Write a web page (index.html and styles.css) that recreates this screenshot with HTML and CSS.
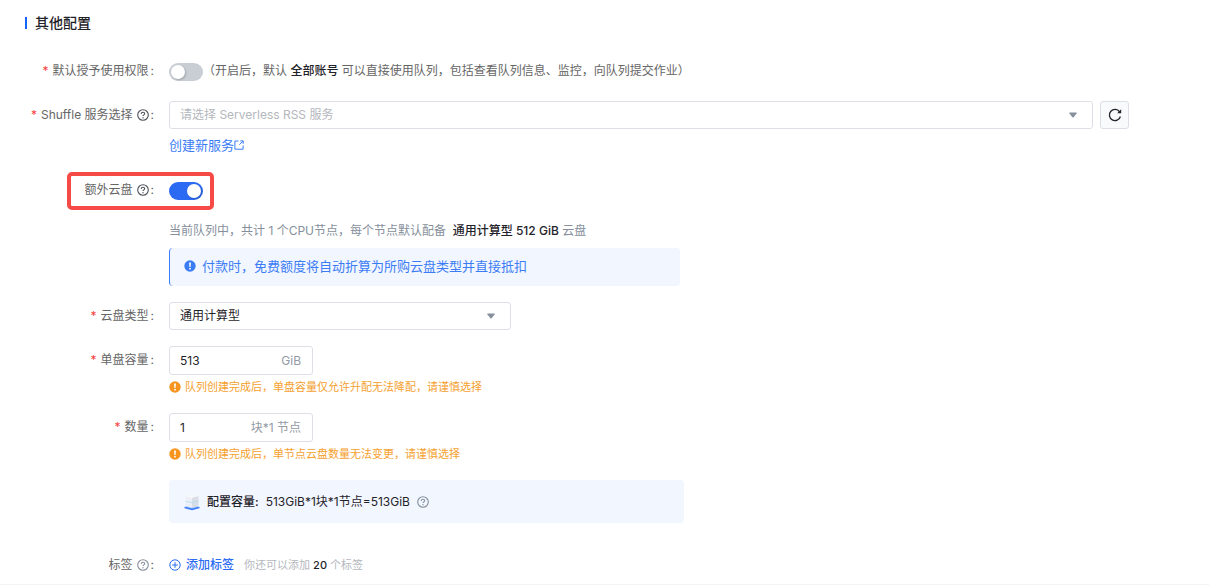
FILE: index.html
```html
<!DOCTYPE html>
<html lang="zh-CN">
<head>
    <meta charset="UTF-8">
    <meta name="viewport" content="width=device-width, initial-scale=1.0">
    <title>其他配置</title>
    <link rel="stylesheet" href="styles.css">
</head>
<body>

    <!-- shared icons -->
    <svg class="sprite" aria-hidden="true">
        <symbol id="icon-help" viewBox="0 0 12 12">
            <circle cx="6" cy="6" r="5.3" fill="none" stroke="currentColor" stroke-width="1.1"/>
            <path d="M4.3 4.9C4.3 3.8 5 3.2 6 3.2s1.7.6 1.7 1.5c0 1.2-1.7 1.2-1.7 2.4" fill="none" stroke="currentColor" stroke-width="1.1"/>
            <circle cx="6" cy="8.7" r=".7" fill="currentColor"/>
        </symbol>
        <symbol id="icon-alert" viewBox="0 0 12 12">
            <circle cx="6" cy="6" r="5.7" fill="currentColor"/>
            <path d="M5.1 2.6h1.8L6.6 7H5.4z" fill="#fff"/>
            <circle cx="6" cy="8.7" r=".9" fill="#fff"/>
        </symbol>
        <symbol id="icon-arrow" viewBox="0 0 8 6">
            <path d="M.4.5h7.2v1L4.6 5.2q-.6.6-1.2 0L.4 1.5z" fill="currentColor"/>
        </symbol>
    </svg>

    <form class="config">
        <h2 class="title">其他配置</h2>

        <div class="row">
            <label class="label required" for="grant">默认授予使用权限<span class="colon">:</span></label>
            <div class="field inline">
                <input type="checkbox" class="switch" id="grant">
                <span class="desc">（开启后，默认 <b>全部账号</b> 可以直接使用队列，包括查看队列信息、监控，向队列提交作业）</span>
            </div>
        </div>

        <div class="row">
            <label class="label required" for="shuffle">Shuffle 服务选择<svg class="help"><use href="#icon-help"/></svg><span class="colon">:</span></label>
            <div class="field">
                <div class="inline service">
                    <div class="select">
                        <select id="shuffle" class="placeholder">
                            <option>请选择 Serverless RSS 服务</option>
                        </select>
                        <svg class="arrow"><use href="#icon-arrow"/></svg>
                    </div>
                    <button type="button" class="refresh" aria-label="刷新">
                        <svg viewBox="0 0 14 14">
                            <path d="M11.6 3.8A5.6 5.6 0 1 0 12.4 8.5" fill="none" stroke="currentColor" stroke-width="1.3"/>
                            <path d="M13.2 1.2v4H9.2z" fill="currentColor"/>
                        </svg>
                    </button>
                </div>
                <a class="link" href="#">创建新服务<svg viewBox="0 0 10 10"><path d="M4.5 1H.9v8.2h8.2V5.5M6.3.9h2.9v2.9M9 1.1 5.3 4.8" fill="none" stroke="currentColor"/></svg></a>
            </div>
        </div>

        <div class="row marked">
            <label class="label" for="disk">额外云盘<svg class="help"><use href="#icon-help"/></svg><span class="colon">:</span></label>
            <div class="field inline">
                <input type="checkbox" class="switch" id="disk" checked>
            </div>
        </div>

        <div class="row">
            <div class="field">
                <p class="summary">当前队列中，共计 1 个CPU节点，每个节点默认配备 &nbsp;<b>通用计算型 512 GiB</b> 云盘</p>
                <div class="notice"><svg><use href="#icon-alert"/></svg>付款时，免费额度将自动折算为所购云盘类型并直接抵扣</div>
            </div>
        </div>

        <div class="row">
            <label class="label required" for="type">云盘类型<span class="colon">:</span></label>
            <div class="field">
                <div class="select short">
                    <select id="type">
                        <option>通用计算型</option>
                    </select>
                    <svg class="arrow"><use href="#icon-arrow"/></svg>
                </div>
            </div>
        </div>

        <div class="row">
            <label class="label required" for="size">单盘容量<span class="colon">:</span></label>
            <div class="field">
                <div class="number">
                    <input type="text" id="size" value="513">
                    <span>GiB</span>
                </div>
                <p class="warning"><svg><use href="#icon-alert"/></svg>队列创建完成后，单盘容量仅允许升配无法降配，请谨慎选择</p>
            </div>
        </div>

        <div class="row">
            <label class="label required" for="count">数量<span class="colon">:</span></label>
            <div class="field">
                <div class="number">
                    <input type="text" id="count" value="1">
                    <span>块*1 节点</span>
                </div>
                <p class="warning"><svg><use href="#icon-alert"/></svg>队列创建完成后，单节点云盘数量无法变更，请谨慎选择</p>
            </div>
        </div>

        <div class="row">
            <div class="field">
                <div class="total">
                    <svg class="disk" viewBox="0 0 16 18">
                        <path d="M.5 14 8 13l7.500 1v1.200L8 17.200.5 15.200z" fill="#3f7cf7"/>
                        <path d="M.5 13.500 8 12l7.500 1.500L8 15.500z" fill="#a9d0ff"/>
                        <path d="M1.500 3 8 4.500v10l-6.500-1.500z" fill="#eceff5"/>
                        <path d="M14.500 3 8 4.500v10l6.500-1.500z" fill="#d9dee6"/>
                        <path d="M1.500 3 8 1.300 14.500 3 8 4.700z" fill="#f7f8fa"/>
                        <path d="m1.500 8.300 6.500 1.300 6.500-1.300" fill="none" stroke="#a8dcfb" stroke-width=".7"/>
                    </svg>
                    <b>配置容量:</b>
                    <span>513GiB*1块*1节点=513GiB</span>
                    <svg class="help light"><use href="#icon-help"/></svg>
                </div>
            </div>
        </div>

        <div class="row tags">
            <label class="label" for="add-tag">标签<svg class="help light"><use href="#icon-help"/></svg><span class="colon">:</span></label>
            <div class="field inline">
                <button type="button" class="add" id="add-tag">
                    <svg viewBox="0 0 12 12"><circle cx="6" cy="6" r="5.2"/><path d="M6 3.2v5.6M3.2 6h5.6"/></svg>添加标签
                </button>
                <span class="tip">你还可以添加 <b>20</b> 个标签</span>
            </div>
        </div>
    </form>

    <footer class="footer"></footer>

</body>
</html>
```

FILE: styles.css
```css
/* General Styles */
*,
*::before,
*::after {
    box-sizing: border-box;
}

body {
    margin: 0;
    background: #fff;
    color: #666;
    font-family: Inter, "Noto Sans CJK SC", sans-serif;
    font-size: 12px;
    line-height: 22px;
}

p {
    margin: 0;
}

b {
    color: #1f2329;
    font-weight: 500;
}

svg {
    flex: none;
}

input,
select,
button {
    font: inherit;
    color: inherit;
}

.sprite {
    display: none;
}

.config {
    display: flex;
    flex-direction: column;
    gap: 16px;
    padding: 12px 80px 5px 0;
}

.title {
    display: flex;
    align-items: center;
    gap: 8px;
    margin: 0 0 7px 25px;
    color: #1f2329;
    font-size: 14px;
    font-weight: 500;
}

.title::before {
    content: "";
    width: 2px;
    height: 12px;
    background: #1664ff;
}

/* Form rows */
.row {
    display: grid;
    grid-template-columns: 155px minmax(0, 1fr);
    column-gap: 14px;
}

.label {
    display: flex;
    align-items: center;
    justify-content: flex-end;
    height: 28px;
}

.required::before {
    content: "*";
    margin-right: 4px;
    color: #f53f3f;
}

.colon {
    margin: 0 1px 0 2px;
}

.field {
    grid-column: 2;
}

.inline {
    display: flex;
    align-items: center;
}

.help {
    width: 12px;
    height: 12px;
    margin-left: 4px;
    color: #4e5259;
}

.light {
    color: #86909c;
}

/* Switch */
.switch {
    appearance: none;
    display: flex;
    flex: none;
    width: 34px;
    height: 18px;
    margin: 2px 0 0;
    padding: 2px;
    border-radius: 9px;
    background: #c9cdd4;
    cursor: pointer;
}

.switch::before {
    content: "";
    width: 14px;
    height: 14px;
    border-radius: 50%;
    background: #fff;
    box-shadow: 1px 1px 2px rgba(0, 0, 0, 0.2);
}

.switch:checked {
    justify-content: flex-end;
    background: #2b6bf3;
}

/* Select */
.service {
    gap: 7px;
}

.select {
    position: relative;
    flex: 1;
    height: 28px;
}

.select select {
    appearance: none;
    display: block;
    width: 100%;
    height: 28px;
    padding: 0 30px 0 10px;
    border: 1px solid #dddfe6;
    border-radius: 3px;
    background: #fff;
    color: #1f2329;
}

.select .placeholder {
    color: #b4b7bd;
}

.short {
    max-width: 342px;
}

.arrow {
    position: absolute;
    top: 11px;
    right: 16px;
    width: 8px;
    height: 6px;
    color: #86909c;
    pointer-events: none;
}

.refresh {
    display: flex;
    align-items: center;
    justify-content: center;
    width: 29px;
    height: 28px;
    padding: 0;
    border: 1px solid #dddfe6;
    border-radius: 3px;
    background: #f9fafc;
    color: #1f2329;
}

.refresh svg {
    width: 14px;
    height: 14px;
}

.link {
    display: flex;
    align-items: center;
    width: fit-content;
    margin: 5px 0 4px;
    color: #3b7cf5;
    font-size: 13px;
    text-decoration: none;
}

.link svg {
    width: 10px;
    height: 10px;
}

/* Red frame over the extra disk switch */
.marked {
    position: relative;
}

.marked::after {
    content: "";
    position: absolute;
    top: -4px;
    left: 67px;
    width: 147px;
    height: 38px;
    border: 4px solid #f54a45;
    border-radius: 5px;
    pointer-events: none;
}

/* Disk settings */
.summary {
    color: #86909c;
}

.notice {
    display: flex;
    align-items: center;
    gap: 6px;
    max-width: 511px;
    min-height: 38px;
    margin-top: 6px;
    padding: 0 14px 2px;
    border-left: 1px solid #3b7cf5;
    border-radius: 4px;
    background: #f2f6ff;
    color: #3b7cf5;
    font-size: 13px;
}

.notice svg,
.warning svg {
    width: 12px;
    height: 12px;
}

.number {
    display: flex;
    align-items: center;
    width: 144px;
    height: 29px;
    padding: 0 11px 0 10px;
    border: 1px solid #dddfe6;
    border-radius: 3px;
}

.number input {
    flex: 1;
    min-width: 0;
    padding: 0;
    border: 0;
    outline: none;
    background: none;
    color: #1f2329;
}

.number span {
    color: #939aa6;
}

.warning {
    display: flex;
    align-items: center;
    gap: 4px;
    margin-top: 2px;
    color: #f5a12f;
    font-size: 11px;
    line-height: 20px;
}

.warning svg {
    color: #f7941d;
}

.total {
    display: flex;
    align-items: center;
    max-width: 515px;
    min-height: 43px;
    padding: 0 15px;
    border-radius: 4px;
    background: #f2f6ff;
    color: #1f2329;
}

.total b {
    margin: 0 7px;
}

.total .help {
    margin-left: 7px;
}

.disk {
    width: 16px;
    height: 18px;
}

/* Tags */
.tags {
    margin-top: 12px;
}

.add {
    display: flex;
    align-items: center;
    gap: 5px;
    padding: 0;
    border: 0;
    background: none;
    color: #2b6bf3;
    font-weight: 500;
}

.add svg {
    width: 12px;
    height: 12px;
    fill: none;
    stroke: currentColor;
}

.tip {
    margin-left: 10px;
    color: #b4b7bd;
    font-size: 11px;
}

.footer {
    height: 1px;
    background: #f2f3f5;
}
```
